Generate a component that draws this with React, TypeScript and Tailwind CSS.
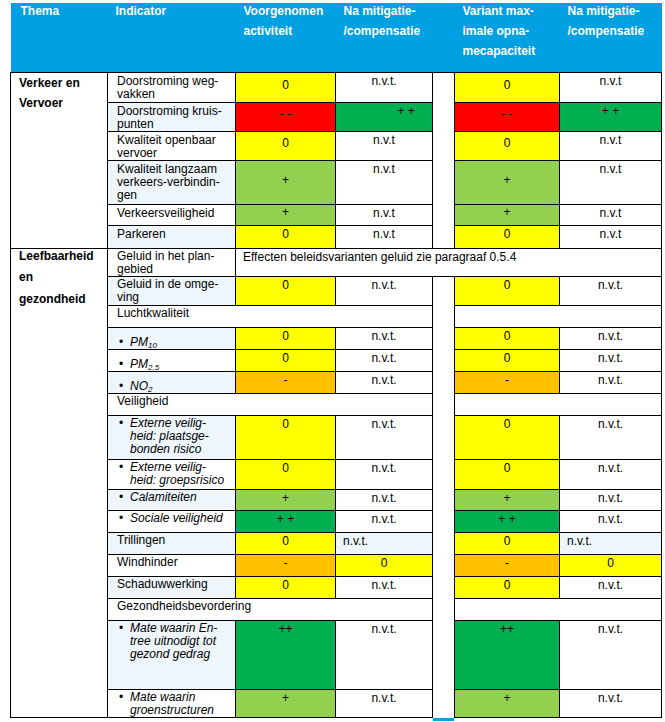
import React from 'react'

const bg = {
  y: 'bg-[#ffff00]',
  r: 'bg-[#ff0000]',
  dg: 'bg-[#00b050]',
  lg: 'bg-[#92d050]',
  o: 'bg-[#ffc000]',
  w: 'bg-white',
  lb: 'bg-[#eef5fb]',
}

type Val = { t: string; c: keyof typeof bg; left?: boolean; extra?: string }

type Row = {
  h: string
  ind: React.ReactNode
  lb?: boolean
  pad?: string
  vals?: [Val, Val, Val, Val]
  kind?: 'effect' | 'group'
}

const Bullet = ({ children }: { children: React.ReactNode }) => (
  <div className="flex">
    <span className="w-[13px] shrink-0 pl-[2px]">•</span>
    <span className="italic">{children}</span>
  </div>
)

const y0: Val = { t: '0', c: 'y' }
const nvt: Val = { t: 'n.v.t.', c: 'w' }
const nvt2: Val = { t: 'n.v.t', c: 'w' }
const plus: Val = { t: '+', c: 'lg' }

const verkeer: Row[] = [
  { h: 'h-[30px]', ind: <>Doorstroming weg-<br />vakken</>, vals: [y0, nvt, y0, nvt2] },
  {
    h: 'h-[28px]',
    lb: true,
    ind: <>Doorstroming kruis-<br />punten</>,
    vals: [{ t: '- -', c: 'r' }, { t: '+ +', c: 'dg', extra: 'pl-[44px]' }, { t: '- -', c: 'r' }, { t: '+ +', c: 'dg' }],
  },
  { h: 'h-[29px]', ind: <>Kwaliteit openbaar<br />vervoer</>, vals: [y0, nvt2, y0, nvt2] },
  { h: 'h-[44px]', lb: true, ind: <>Kwaliteit langzaam<br />verkeers-verbindin-<br />gen</>, vals: [plus, nvt2, plus, nvt2] },
  { h: 'h-[21px]', ind: 'Verkeersveiligheid', vals: [plus, nvt2, plus, nvt2] },
  { h: 'h-[23px]', lb: true, ind: 'Parkeren', vals: [y0, nvt2, y0, nvt2] },
]

const leef: Row[] = [
  { h: 'h-[28px]', ind: <>Geluid in het plan-<br />gebied</>, kind: 'effect' },
  { h: 'h-[29px]', lb: true, ind: <>Geluid in de omge-<br />ving</>, vals: [y0, nvt, y0, nvt] },
  { h: 'h-[22px]', ind: 'Luchtkwaliteit', kind: 'group' },
  { h: 'h-[21px]', lb: true, pad: 'pt-[8px]', ind: <Bullet>PM<sub className="text-[8px]">10</sub></Bullet>, vals: [y0, nvt, y0, nvt] },
  { h: 'h-[22px]', pad: 'pt-[8px]', ind: <Bullet>PM<sub className="text-[8px]">2,5</sub></Bullet>, vals: [y0, nvt, y0, nvt] },
  {
    h: 'h-[22px]',
    lb: true,
    pad: 'pt-[8px]',
    ind: <Bullet>NO<sub className="text-[8px]">2</sub></Bullet>,
    vals: [{ t: '-', c: 'o' }, nvt, { t: '-', c: 'o' }, nvt],
  },
  { h: 'h-[22px]', ind: 'Veiligheid', kind: 'group' },
  { h: 'h-[44px]', lb: true, ind: <Bullet>Externe veilig-<br />heid: plaatsge-<br />bonden risico</Bullet>, vals: [y0, nvt, y0, nvt] },
  { h: 'h-[30px]', ind: <Bullet>Externe veilig-<br />heid: groepsrisico</Bullet>, vals: [y0, nvt, y0, nvt] },
  { h: 'h-[21px]', lb: true, ind: <Bullet>Calamiteiten</Bullet>, vals: [plus, nvt, plus, nvt] },
  {
    h: 'h-[22px]',
    ind: <Bullet>Sociale veiligheid</Bullet>,
    vals: [{ t: '+ +', c: 'dg' }, nvt, { t: '+ +', c: 'dg' }, nvt],
  },
  {
    h: 'h-[22px]',
    lb: true,
    ind: 'Trillingen',
    vals: [y0, { t: 'n.v.t.', c: 'lb', left: true }, y0, { t: 'n.v.t.', c: 'lb', left: true }],
  },
  { h: 'h-[22px]', ind: 'Windhinder', vals: [{ t: '-', c: 'o' }, y0, { t: '-', c: 'o' }, y0] },
  { h: 'h-[22px]', lb: true, ind: 'Schaduwwerking', vals: [y0, nvt, y0, nvt] },
  { h: 'h-[22px]', ind: 'Gezondheidsbevordering', kind: 'group' },
  {
    h: 'h-[69px]',
    lb: true,
    ind: <Bullet>Mate waarin En-<br />tree uitnodigt tot<br />gezond gedrag</Bullet>,
    vals: [{ t: '++', c: 'dg' }, nvt, { t: '++', c: 'dg' }, nvt],
  },
  { h: 'h-[28px]', ind: <Bullet>Mate waarin<br />groenstructuren</Bullet>, vals: [plus, nvt, plus, nvt] },
]

const td = 'border border-black p-0'

function ValCell({ v, mid }: { v: Val; mid: boolean }) {
  return (
    <td
      className={`${td} ${bg[v.c]} ${mid ? 'align-middle pb-[4px]' : 'align-top pt-[2px]'} ${
        v.left ? 'text-left pl-[7px]' : 'text-center'
      } ${v.extra ?? ''}`}
    >
      {v.t}
    </td>
  )
}

function Section({ rows, thema, first }: { rows: Row[]; thema: React.ReactNode; first: boolean }) {
  return (
    <>
      {rows.map((row, i) => {
        const gapHere = first ? i === 0 : i === 1
        const gapSpan = first ? rows.length : rows.length - 1
        const pad = row.pad ?? (first ? 'pt-[2px]' : 'pt-[1px]')
        return (
          <tr key={i} className={row.h}>
            {i === 0 && (
              <td rowSpan={rows.length} className={`${td} align-top bg-white pl-[8px] font-bold`}>
                {thema}
              </td>
            )}
            <td
              colSpan={row.kind === 'group' ? 3 : 1}
              className={`${td} align-top ${row.lb ? bg.lb : bg.w} pl-[9px] pr-[2px] ${row.kind === 'group' ? 'pt-[1px]' : pad}`}
            >
              {row.ind}
            </td>
            {row.kind === 'effect' && (
              <td colSpan={5} className={`${td} align-top bg-white pl-[7px] pt-[2px]`}>
                Effecten beleidsvarianten geluid zie paragraaf 0.5.4
              </td>
            )}
            {row.vals && (
              <>
                <ValCell v={row.vals[0]} mid={first} />
                <ValCell v={row.vals[1]} mid={false} />
              </>
            )}
            {gapHere && <td rowSpan={gapSpan} className="border-x border-black bg-white p-0" />}
            {row.vals && (
              <>
                <ValCell v={row.vals[2]} mid={first} />
                <ValCell v={row.vals[3]} mid={false} />
              </>
            )}
            {row.kind === 'group' && <td colSpan={2} className={`${td} bg-white`} />}
          </tr>
        )
      })}
    </>
  )
}

const headers: React.ReactNode[] = [
  'Thema',
  'Indicator',
  <>Voorgenomen<br />activiteit</>,
  <>Na mitigatie-<br />/compensatie</>,
  '',
  <>Variant max-<br />imale opna-<br />mecapaciteit</>,
  <>Na mitigatie-<br />/compensatie</>,
]

export default function App() {
  return (
    <div className="w-[665px] h-[722px] overflow-hidden bg-white pt-[3px] pl-[10px] text-[12px] leading-[13px] text-black font-['Liberation_Sans',Arial,sans-serif]">
      <table className="table-fixed border-collapse w-[651px]">
        <colgroup>
          <col className="w-[97px]" />
          <col className="w-[128px]" />
          <col className="w-[100px]" />
          <col className="w-[97px]" />
          <col className="w-[22px]" />
          <col className="w-[105px]" />
          <col className="w-[102px]" />
        </colgroup>
        <thead>
          <tr className="h-[69px]">
            {headers.map((h, i) => (
              <th
                key={i}
                className={`border-b border-black bg-[#00a0e3] p-0 align-top text-left font-bold text-white leading-[20px] ${
                  i === 0 ? 'pl-[10px]' : i === 4 ? '' : 'pl-[8px]'
                }`}
              >
                <div className="-mt-[2px]">{h}</div>
              </th>
            ))}
          </tr>
        </thead>
        <tbody>
          <Section
            rows={verkeer}
            first
            thema={
              <div className="leading-[20px]">
                Verkeer en
                <br />
                Vervoer
              </div>
            }
          />
          <Section
            rows={leef}
            first={false}
            thema={
              <div className="leading-[21.5px] -mt-[3px]">
                Leefbaarheid
                <br />
                en
                <br />
                gezondheid
              </div>
            }
          />
        </tbody>
      </table>
      <div className="ml-[423px] w-[21px] h-[3px] bg-[#00a0e3]" />
    </div>
  )
}
